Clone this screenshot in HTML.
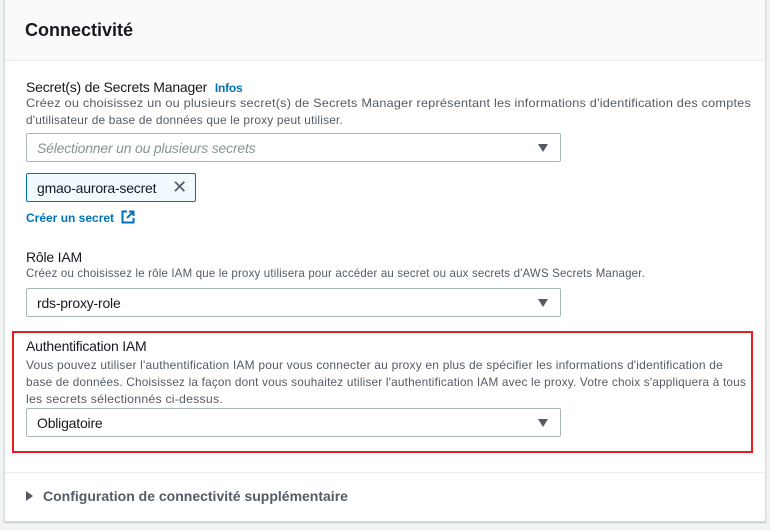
<!DOCTYPE html>
<html><head><meta charset="utf-8"><style>
*{box-sizing:border-box;margin:0;padding:0}
body{width:770px;height:530px;background:#f2f3f3;font-family:"Liberation Sans",sans-serif;position:relative;overflow:hidden;color:#16191f}
.card{position:absolute;left:4px;top:0;width:762px;height:522px;background:#fff;border:1px solid #d5dbdb;border-top:none;box-shadow:0 1px 1px rgba(0,28,36,.2)}
.hdr{position:absolute;left:0;top:0;width:100%;height:61px;background:#fafafa;border-bottom:1px solid #eaeded}
.abs{position:absolute;white-space:nowrap}
.title{left:20px;top:20px;font-size:18px;font-weight:bold}
.lbl{font-size:14px;letter-spacing:-0.2px}
.desc{font-size:12.5px;color:#545b64;line-height:17px;letter-spacing:0.2px}
.desc span{display:inline-block;transform-origin:0 0}
.sel{position:absolute;left:21px;width:535px;height:29px;border:1px solid #aab7b8;border-radius:2px;background:#fff;font-size:14px;padding:6px 10px;letter-spacing:-0.2px}
.sel:after{content:"";position:absolute;right:12px;top:10px;border-left:5px solid transparent;border-right:5px solid transparent;border-top:8px solid #545b64}
.red{position:absolute;left:12px;top:331px;width:741px;height:122px;border:2px solid #ec1c1c}
</style></head><body>
<div class="card">
<div class="hdr"></div>
<div class="abs title">Connectivité</div>
<div class="abs lbl" style="left:21px;top:79px">Secret(s) de Secrets Manager <span style="color:#0073bb;font-weight:bold;font-size:12px;margin-left:4px">Infos</span></div>
<div class="abs desc" style="left:21px;top:96px"><span class="ln">Créez ou choisissez un ou plusieurs secret(s) de Secrets Manager représentant les informations d'identification des comptes</span><br><span class="ln">d'utilisateur de base de données que le proxy peut utiliser.</span></div>
<div class="sel" style="top:133px;color:#879596;font-style:italic">Sélectionner un ou plusieurs secrets</div>
<div class="abs" style="left:21px;top:173px;width:170px;height:29px;border:1px solid #0073bb;border-radius:2px;background:#f1faff;font-size:14px;padding:6px 10px;letter-spacing:-0.2px">gmao-aurora-secret<span style="position:absolute;right:8px;top:3px;font-size:18px;color:#545b64">✕</span></div>
<div class="abs" style="left:21px;top:210px;font-size:12px;font-weight:bold;color:#0073bb">Créer un secret
<svg width="14" height="14" viewBox="0 0 14 14" style="vertical-align:-2px;margin-left:4px"><path d="M6 1.5H1.5v11h11V8M8 1.5h4.5V6M12.5 1.5L6 8" fill="none" stroke="#0073bb" stroke-width="2"/></svg></div>
<div class="abs lbl" style="left:21px;top:249px">Rôle IAM</div>
<div class="abs desc" style="left:21px;top:266px"><span class="ln">Créez ou choisissez le rôle IAM que le proxy utilisera pour accéder au secret ou aux secrets d'AWS Secrets Manager.</span></div>
<div class="sel" style="top:288px">rds-proxy-role</div>
<div class="abs lbl" style="left:21px;top:338px">Authentification IAM</div>
<div class="abs desc" style="left:21px;top:358px"><span class="ln">Vous pouvez utiliser l'authentification IAM pour vous connecter au proxy en plus de spécifier les informations d'identification de</span><br><span class="ln">base de données. Choisissez la façon dont vous souhaitez utiliser l'authentification IAM avec le proxy. Votre choix s'appliquera à tous</span><br><span class="ln">les secrets sélectionnés ci-dessus.</span></div>
<div class="sel" style="top:408px">Obligatoire</div>
<div class="abs" style="left:0;top:472px;width:100%;border-top:1px solid #eaeded"></div>
<div class="abs" style="left:21px;top:488px;font-size:14px;font-weight:bold;color:#545b64;letter-spacing:0px"><span style="display:inline-block;border-top:5px solid transparent;border-bottom:5px solid transparent;border-left:7px solid #545b64;margin-right:10px"></span>Configuration de connectivité supplémentaire</div>
</div>
<div class="red"></div>
<script>
var w=[725,317,619,697,720,197];
var l=document.querySelectorAll('.ln');
for(var i=0;i<l.length;i++){var s=w[i]/l[i].getBoundingClientRect().width;l[i].style.transform='scale('+s+',0.92)';}
</script>
</body></html>
